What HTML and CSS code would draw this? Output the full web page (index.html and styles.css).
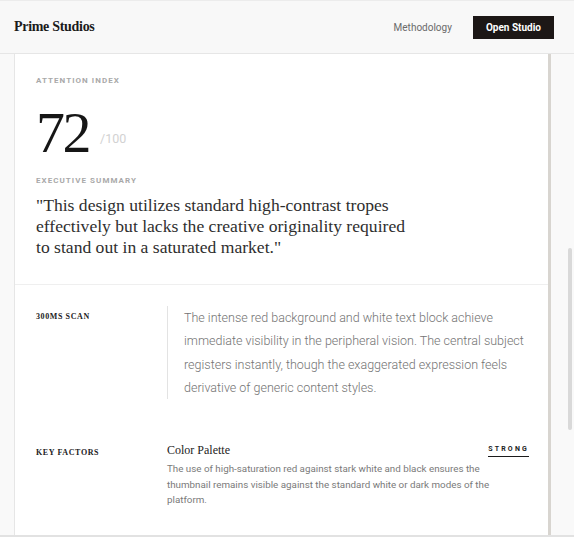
FILE: index.html
```html
<!DOCTYPE html>
<html lang="en">
<head>
<meta charset="utf-8">
<title>Prime Studios</title>
<link rel="stylesheet" href="styles.css">
</head>
<body>
<header class="topbar">
  <div class="brand">Prime Studios</div>
  <nav class="nav">
    <a class="nav-link" href="#">Methodology</a>
    <a class="nav-btn" href="#">Open Studio</a>
  </nav>
</header>
<div class="page">
  <main class="card">
    <section class="summary">
      <div class="eyebrow">Attention Index</div>
      <div class="score"><span class="score-num">72</span><span class="score-max">/100</span></div>
      <div class="eyebrow">Executive Summary</div>
      <p class="quote">"This design utilizes standard high-contrast tropes effectively but lacks the creative originality required to stand out in a saturated market."</p>
    </section>
    <section class="row scan">
      <div class="row-label">300ms Scan</div>
      <p class="scan-text">The intense red background and white text block achieve immediate visibility in the peripheral vision. The central subject registers instantly, though the exaggerated expression feels derivative of generic content styles.</p>
    </section>
    <section class="row factors">
      <div class="row-label">Key Factors</div>
      <div class="factor">
        <div class="factor-head">
          <span class="factor-title">Color Palette</span>
          <span class="factor-tag">Strong</span>
        </div>
        <p class="factor-text">The use of high-saturation red against stark white and black ensures the thumbnail remains visible against the standard white or dark modes of the platform.</p>
      </div>
    </section>
  </main>
  <div class="scroll-track"><div class="scroll-thumb"></div></div>
</div>
</body>
</html>
```
FILE: styles.css
```css
* { box-sizing: border-box; }
html, body { margin: 0; padding: 0; }
body {
  width: 574px;
  height: 537px;
  overflow: hidden;
  background: #f9f9f9;
  font-family: "Roboto", "Liberation Sans", sans-serif;
  color: #222;
  display: flex;
  flex-direction: column;
  border-bottom: 2px solid #e2e2e2;
}
.topbar {
  height: 54px;
  flex: none;
  display: flex;
  align-items: center;
  justify-content: space-between;
  padding: 0 20px 0 14px;
  background: #f8f8f8;
  border-top: 1px solid #ececec;
  border-bottom: 1px solid #e6e6e6;
}
.brand {
  font-family: "Liberation Serif", "DejaVu Serif", serif;
  font-weight: 700;
  font-size: 14px;
  letter-spacing: -0.3px;
  color: #1b1b1b;
}
.nav { display: flex; align-items: center; gap: 21px; }
.nav-link {
  font-size: 10px;
  color: #6a6a6a;
  text-decoration: none;
}
.nav-btn {
  display: block;
  background: #1c1716;
  color: #fff;
  font-size: 10px;
  font-weight: 700;
  text-decoration: none;
  padding: 6px 13px 5px;
  line-height: 12px;
}
.page {
  flex: 1;
  display: flex;
  min-height: 0;
  padding-left: 14px;
}
.card {
  width: 537px;
  background: #fff;
  border-left: 1px solid #e6e6e6;
  border-right: 3px solid #d8d5d0;
}
.summary {
  padding: 21px 21px 0 21px;
  height: 231px;
  border-bottom: 1px solid #efefef;
}
.eyebrow {
  font-size: 8px;
  font-weight: 700;
  letter-spacing: 1.05px;
  text-transform: uppercase;
  color: #a9a9a9;
  line-height: 12px;
}
.score {
  display: flex;
  align-items: baseline;
  margin: 10px 0 6px;
  height: 72px;
}
.score-num {
  font-family: "Liberation Serif", "DejaVu Serif", serif;
  font-size: 58px;
  line-height: 72px;
  color: #161616;
  letter-spacing: -2.5px;
}
.score-max {
  margin-left: 11px;
  font-size: 12.5px;
  color: #d2d2d2;
  position: relative;
  top: -9px;
}
.quote {
  margin: 8px 0 0;
  width: 380px;
  font-family: "Liberation Serif", "DejaVu Serif", serif;
  font-size: 17.6px;
  line-height: 21px;
  color: #2e2e2e;
}
.row {
  display: grid;
  grid-template-columns: 131px 1fr;
  padding: 0 21px;
}
.row-label {
  font-family: "Liberation Serif", "DejaVu Serif", serif;
  font-size: 8px;
  font-weight: 700;
  letter-spacing: 0.6px;
  text-transform: uppercase;
  color: #222;
}
.scan { padding-top: 21px; }
.scan .row-label { padding-top: 6px; }
.scan-text {
  margin: 0;
  border-left: 1px solid #e3e3e3;
  padding: 0 0 0 16px;
  font-weight: 300;
  font-size: 12.5px;
  line-height: 23.3px;
  color: #737373;
}
.factors { padding-top: 44px; }
.factors .row-label { padding-top: 5px; }
.factor-head {
  display: flex;
  justify-content: space-between;
  align-items: flex-start;
}
.factor-title {
  font-family: "Liberation Serif", "DejaVu Serif", serif;
  font-size: 12px;
  color: #222;
}
.factor-tag {
  margin-top: 2px;
  font-size: 7px;
  font-weight: 700;
  letter-spacing: 2.2px;
  text-transform: uppercase;
  color: #222;
  padding-bottom: 3px;
  border-bottom: 1.5px solid #1b1b1b;
  margin-right: -2px;
}
.factor-text {
  margin: 3px 0 0;
  font-size: 9.8px;
  line-height: 15.5px;
  color: #7a7a7a;
  width: 328px;
}
.scroll-track {
  flex: 1;
  position: relative;
}
.scroll-thumb {
  position: absolute;
  right: 2px;
  top: 194px;
  width: 4px;
  height: 182px;
  background: #d9d9d9;
  border-radius: 2px;
}
```
